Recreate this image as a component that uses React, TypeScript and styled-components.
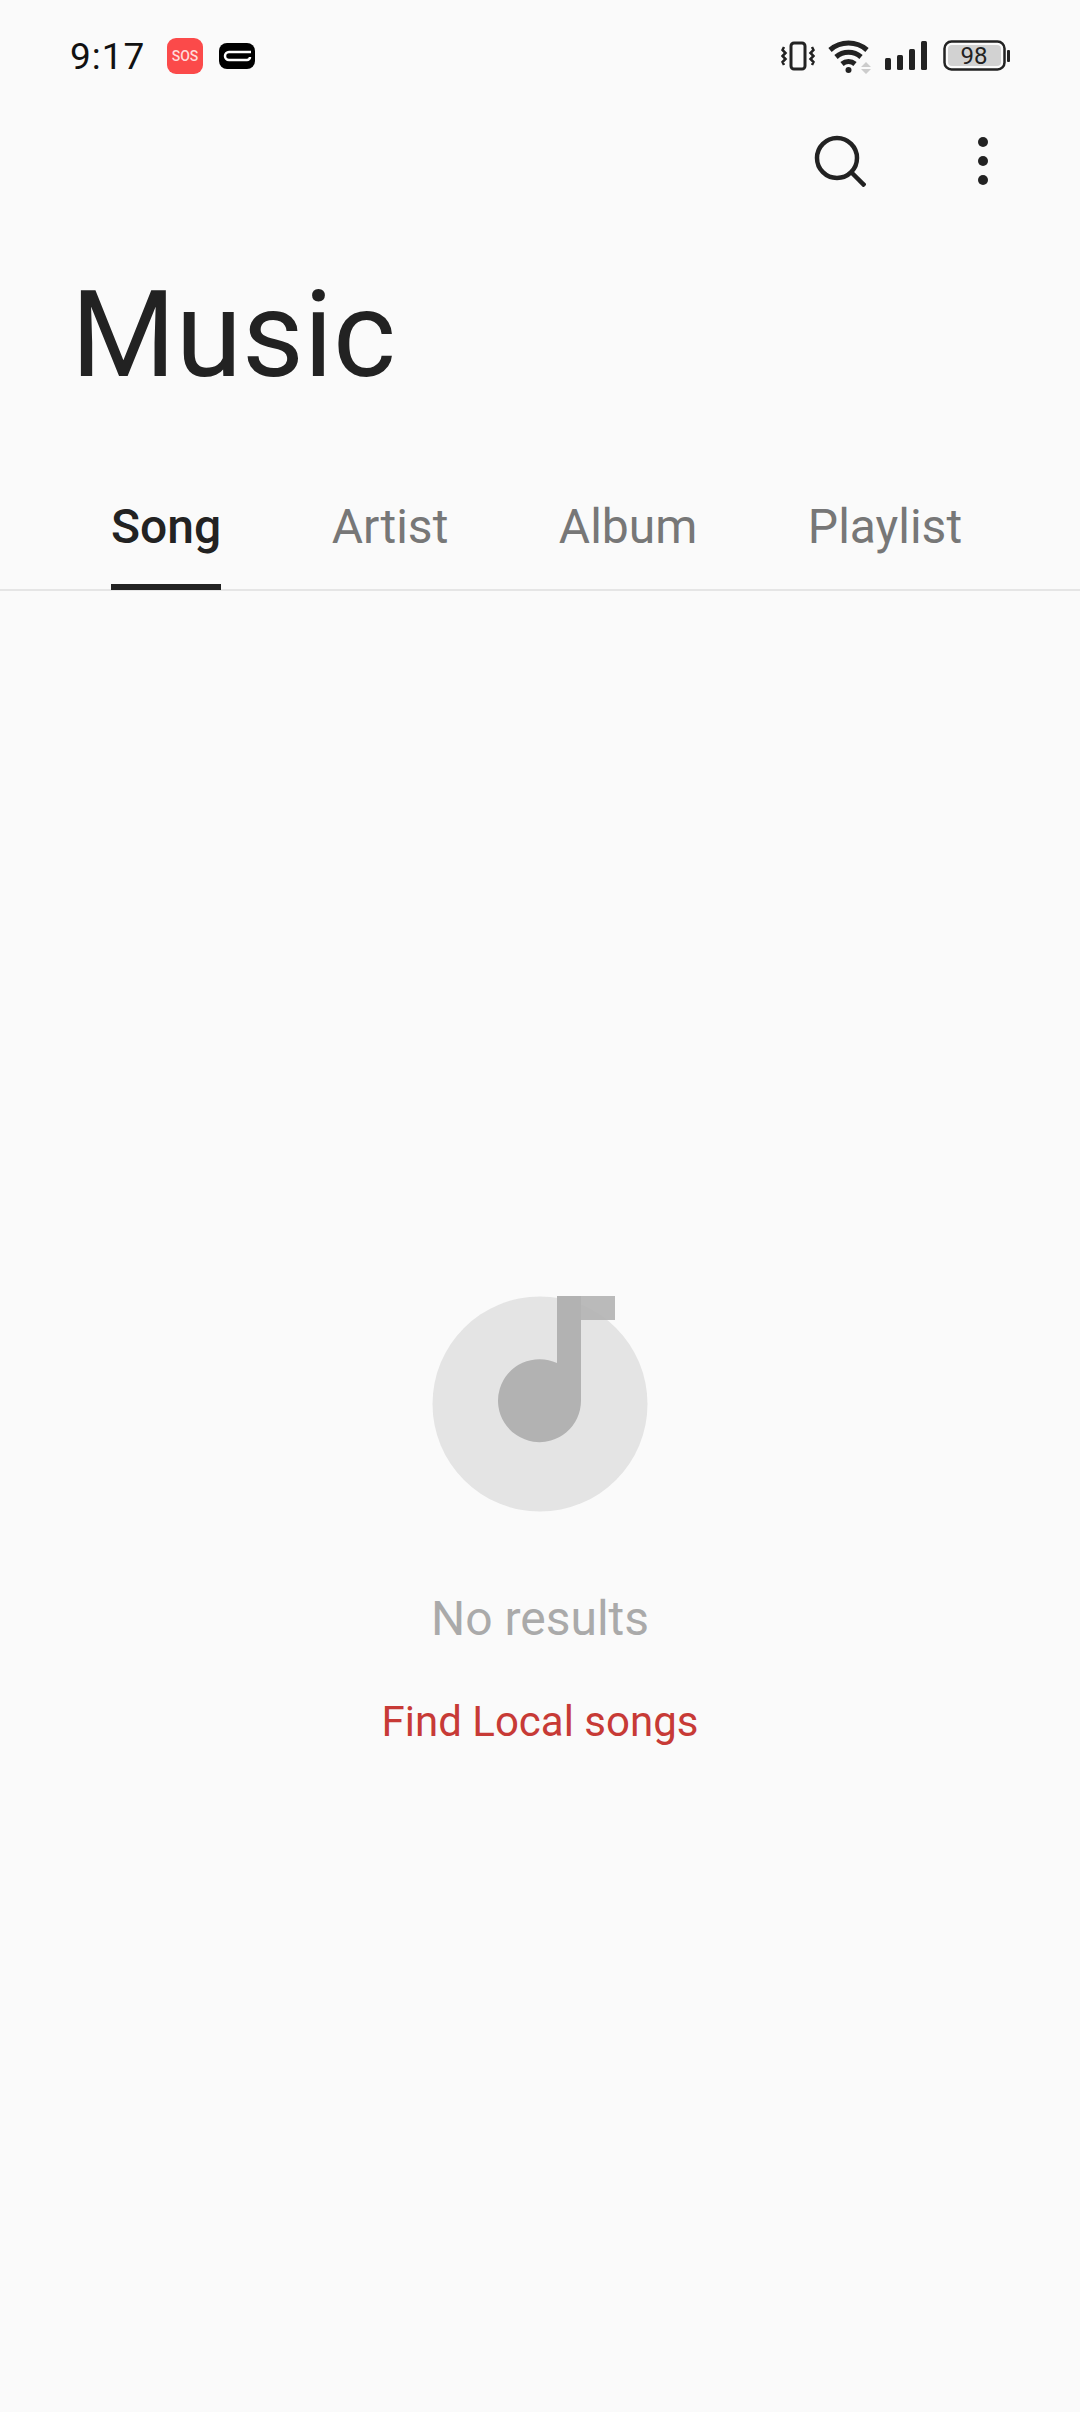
import React from 'react';
import styled, { createGlobalStyle } from 'styled-components';

const GlobalStyle = createGlobalStyle`
    html, body {
        margin: 0;
        padding: 0;
        background: #fafafa;
    }
    * {
        box-sizing: border-box;
    }
`;

const Page = styled.div`
    width: 1080px;
    height: 2412px;
    background: #fafafa;
    font-family: Roboto, "Noto Sans", sans-serif;
    display: flex;
    flex-direction: column;
    overflow: hidden;
`;

const StatusBar = styled.div`
    height: 110px;
    padding: 2px 69px 0 70px;
    display: flex;
    align-items: center;
    justify-content: space-between;
`;

const StatusGroup = styled.div`
    display: flex;
    align-items: center;
`;

const Clock = styled.span`
    font-size: 37px;
    color: #111;
    letter-spacing: 1px;
    width: 97px;
`;

const SosBadge = styled.span`
    width: 36px;
    height: 36px;
    border-radius: 9px;
    background: #fb4a4a;
    color: #ffd9d9;
    font-size: 14px;
    font-weight: 500;
    display: flex;
    align-items: center;
    justify-content: center;
`;

const Toolbar = styled.div`
    height: 100px;
    padding: 1px 47px 0 0;
    display: flex;
    align-items: center;
    justify-content: flex-end;
`;

const ToolButton = styled.button<{ $width: number }>`
    width: ${({ $width }) => $width}px;
    height: 99px;
    padding: 0;
    border: none;
    background: none;
    display: flex;
    align-items: center;
    justify-content: center;
`;

const Title = styled.h1`
    margin: 0;
    padding: 50px 0 0 71px;
    height: 200px;
    display: flex;
    align-items: center;
    font-size: 120px;
    font-weight: 400;
    color: #222;
`;

const Tabs = styled.div`
    height: 181px;
    padding: 0 0 0 111px;
    display: flex;
    align-items: flex-end;
    border-bottom: 2px solid #e5e5e5;
`;

const Tab = styled.div<{ $active?: boolean; $gap: number }>`
    height: 100px;
    margin-right: ${({ $gap }) => $gap}px;
    margin-bottom: -1px;
    padding-bottom: 22px;
    display: flex;
    align-items: center;
    font-size: 48px;
    font-weight: ${({ $active }) => ($active ? 500 : 400)};
    color: ${({ $active }) => ($active ? '#222' : '#777')};
    border-bottom: 6px solid ${({ $active }) => ($active ? '#222' : 'transparent')};
`;

const Empty = styled.div`
    flex: 1;
    padding-top: 705px;
    display: flex;
    flex-direction: column;
    align-items: center;
`;

const EmptyIcon = styled.svg`
    display: block;
`;

const EmptyText = styled.div`
    margin-top: 77px;
    font-size: 48px;
    line-height: 60px;
    color: #aaa;
`;

const FindLink = styled.a`
    margin-top: 45px;
    font-size: 42px;
    line-height: 56px;
    color: #c73a36;
`;

const App = () => (
    <Page>
        <GlobalStyle />
        <StatusBar>
            <StatusGroup>
                <Clock>9:17</Clock>
                <SosBadge>SOS</SosBadge>
                <svg width="38" height="28" viewBox="0 0 38 28" style={{ marginLeft: 15 }}>
                    <rect x="1" y="1" width="36" height="26" rx="8" fill="#000" />
                    <path d="M33 10H11a4 4 0 0 0 0 8h18a3 3 0 0 0 3-3" fill="none" stroke="#fff" strokeWidth="2.500" />
                </svg>
            </StatusGroup>
            <StatusGroup>
                <svg width="34" height="30" viewBox="0 0 34 30">
                    <rect x="10" y="2" width="14" height="26" rx="3" fill="none" stroke="#222" strokeWidth="3" />
                    <path d="M3 6l-1.500 3 3 3-3 3 3 3-3 3 1.500 3M31 6l1.500 3-3 3 3 3-3 3 3 3-1.500 3" fill="none" stroke="#222" strokeWidth="2.500" />
                </svg>
                <svg width="46" height="36" viewBox="0 0 46 36" style={{ marginLeft: 13 }}>
                    <path d="M2 12a28 28 0 0 1 37 0M8 19a19 19 0 0 1 25 0M14 26a10 10 0 0 1 13 0" fill="none" stroke="#222" strokeWidth="5" />
                    <circle cx="20.500" cy="32" r="3" fill="#222" />
                    <path d="M38 24l5 5h-10zM38 36l5-5h-10z" fill="#ccc" />
                </svg>
                <svg width="44" height="32" viewBox="0 0 44 32" style={{ marginLeft: 10 }}>
                    <rect x="1" y="18" width="6" height="12" rx="1.500" fill="#222" />
                    <rect x="13" y="15" width="6" height="15" rx="1.500" fill="#222" />
                    <rect x="25" y="9" width="6" height="21" rx="1.500" fill="#222" />
                    <rect x="37" y="1" width="6" height="29" rx="1.500" fill="#222" />
                </svg>
                <svg width="68" height="32" viewBox="0 0 68 32" style={{ marginLeft: 15 }}>
                    <rect x="1.500" y="1.500" width="60" height="28" rx="7" fill="none" stroke="#222" strokeWidth="2.500" />
                    <rect x="5" y="5" width="53" height="21" rx="4" fill="#d2d2d2" />
                    <rect x="64" y="10" width="3" height="12" rx="1" fill="#222" />
                    <text x="31" y="24" textAnchor="middle" fontFamily="Roboto" fontSize="24" fill="#222">98</text>
                </svg>
            </StatusGroup>
        </StatusBar>
        <Toolbar>
            <ToolButton $width={187}>
                <svg width="52" height="52" viewBox="0 0 52 52">
                    <circle cx="23" cy="23" r="20" fill="none" stroke="#222" strokeWidth="4.500" />
                    <path d="M37 37l14 14" stroke="#222" strokeWidth="4.500" />
                </svg>
            </ToolButton>
            <ToolButton $width={100}>
                <svg width="12" height="50" viewBox="0 0 12 50">
                    <circle cx="6" cy="6" r="5" fill="#222" />
                    <circle cx="6" cy="25" r="5" fill="#222" />
                    <circle cx="6" cy="44" r="5" fill="#222" />
                </svg>
            </ToolButton>
        </Toolbar>
        <Title>Music</Title>
        <Tabs>
            <Tab $active $gap={110.5}>Song</Tab>
            <Tab $gap={110.5}>Artist</Tab>
            <Tab $gap={110.5}>Album</Tab>
            <Tab $gap={0}>Playlist</Tab>
        </Tabs>
        <Empty>
            <EmptyIcon width="216" height="216" viewBox="0 0 216 216">
                <circle cx="108" cy="108" r="107.500" fill="#e4e4e4" />
                <path d="M125 0h24v105a41.500 41.500 0 1 1-24-38z" fill="#b2b2b2" />
                <path d="M149 0h34v24h-34z" fill="#b2b2b2" opacity="0.9" />
            </EmptyIcon>
            <EmptyText>No results</EmptyText>
            <FindLink>Find Local songs</FindLink>
        </Empty>
    </Page>
);

export default App;
